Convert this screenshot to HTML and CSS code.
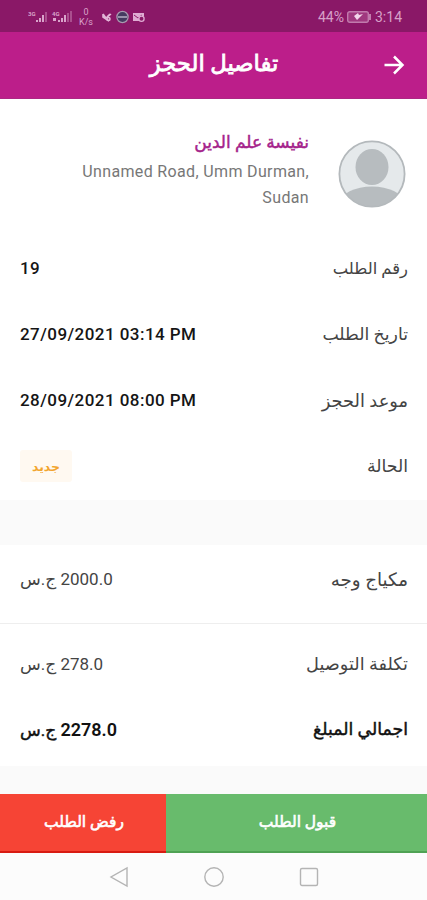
FILE: index.html
```html
<!DOCTYPE html>
<html lang="ar" dir="rtl">
<head>
<meta charset="utf-8">
<title>تفاصيل الحجز</title>
<link rel="stylesheet" href="styles.css">
</head>
<body>
<div class="status" dir="ltr">
  <div class="status-left">
    <svg class="signals" width="122" height="32" viewBox="0 0 122 32">
      <g fill="#d9a3cb">
        <text class="tiny" x="0" y="16">3G</text>
        <path d="M8 20h2v2H8zM11 18h2v4h-2zM14 15h2v7h-2z"/>
        <path d="M17 12h2v10h-2z" opacity=".4"/>
        <text class="tiny" x="24" y="16">4G</text>
        <path d="M25 18h3v3h-3zM30 20h2v2h-2zM33 18h2v4h-2zM36 15h2v7h-2z"/>
        <path d="M39 13h2v9h-2zM42 11h2v11h-2z" opacity=".4"/>
        <text class="speed" x="55.500" y="14.500">0</text>
        <text class="speed" x="51" y="25">K/s</text>
      </g>
      <g fill="none" stroke="#e2b5d7" stroke-width="1.600">
        <path d="M75 14l3 4 5-4M75 14v3l6 4M79 17l3-3"/>
        <circle cx="80.500" cy="19" r="1.500"/>
      </g>
      <circle cx="94.500" cy="17" r="5.600" fill="#453a60" stroke="#a79aaf" stroke-width="1.300"/>
      <path d="M90 17h9" stroke="#b7afc5" stroke-width="1.500"/>
      <path d="M105 13h11v3h-3v5h-8z" fill="#dfacd3"/>
      <path d="M106 15l4 3 4-3" fill="none" stroke="#8a1867"/>
      <circle cx="113.500" cy="18.800" r="2.600" fill="#8a1867" stroke="#dfacd3" stroke-width="1.300"/>
    </svg>
  </div>
  <div class="status-right">
    <span>44%</span>
    <svg width="25" height="12" viewBox="0 0 25 12">
      <rect x=".7" y=".7" width="20.600" height="10.600" rx="2" fill="#a0387f" stroke="#c17bad" stroke-width="1.400"/>
      <path d="M7 5l3 4 6-6-4 1-1-2z" fill="#f3d6eb"/>
      <path d="M23 3v6" stroke="#c17bad" stroke-width="2"/>
    </svg>
    <span>3:14</span>
  </div>
</div>
<header class="appbar">
  <svg class="back" width="22" height="22" viewBox="0 0 22 22"><path d="M1.500 11h18M11 2.500l8.500 8.500-8.500 8.500" fill="none" stroke="#fff" stroke-width="2.500"/></svg>
  <h1>تفاصيل الحجز</h1>
</header>
<main>
  <section class="card details">
    <div class="profile">
      <svg class="avatar" width="68" height="68" viewBox="0 0 68 68">
        <defs><clipPath id="face"><circle cx="34" cy="34" r="32.500"/></clipPath></defs>
        <circle cx="34" cy="34" r="33" fill="#e5e9eb"/>
        <g clip-path="url(#face)" fill="#b7bcbf"><ellipse cx="34" cy="27" rx="16.500" ry="18"/><ellipse cx="34" cy="62" rx="31" ry="15.500"/></g>
        <circle cx="34" cy="34" r="32.600" fill="none" stroke="#b4b9bc" stroke-width="1.800"/>
      </svg>
      <div class="who">
        <div class="name">نفيسة علم الدين</div>
        <div class="address" dir="ltr">Unnamed Road, Umm Durman,<br>Sudan</div>
      </div>
    </div>
    <div class="row number"><span class="label">رقم الطلب</span><span class="value" dir="ltr">19</span></div>
    <div class="row"><span class="label">تاريخ الطلب</span><span class="value" dir="ltr">27/09/2021 03:14 PM</span></div>
    <div class="row due"><span class="label">موعد الحجز</span><span class="value" dir="ltr">28/09/2021 08:00 PM</span></div>
    <div class="row"><span class="label">الحالة</span><span class="badge">جديد</span></div>
  </section>
  <section class="card costs">
    <div class="row service"><span class="label">مكياج وجه</span><span class="price">2000.0 ج.س</span></div>
    <div class="row delivery"><span class="label">تكلفة التوصيل</span><span class="price">278.0 ج.س</span></div>
    <div class="row total"><span class="label">اجمالي المبلغ</span><span class="price"><span class="amount">2278.0</span> ج.س</span></div>
  </section>
</main>
<div class="actions">
  <button class="accept">قبول الطلب</button>
  <button class="reject">رفض الطلب</button>
</div>
<nav class="sysnav" dir="ltr">
  <svg width="20" height="22" viewBox="0 0 20 22"><path d="M18 2v18L2 11z"/></svg>
  <svg width="22" height="22" viewBox="0 0 22 22"><circle cx="11" cy="11" r="9.200"/></svg>
  <svg width="20" height="22" viewBox="0 0 20 22"><rect x="1.500" y="2.500" width="17" height="17" rx="1.500"/></svg>
</nav>
</body>
</html>
```
FILE: styles.css
```css
* { box-sizing: border-box; }
body {
  margin: 0;
  width: 427px;
  height: 900px;
  overflow: hidden;
  display: flex;
  flex-direction: column;
  background: #fafafa;
  color: #444;
  font-family: Roboto, "DejaVu Sans", sans-serif;
}
.status {
  height: 32px;
  display: flex;
  justify-content: space-between;
  background: #8a1867;
  color: #d7a0c8;
}
.status-left { padding-left: 28px; }
.signals { display: block; }
.tiny { font: 700 6px Roboto, sans-serif; }
.speed { font: 9px Roboto, sans-serif; }
.status-right {
  display: flex;
  align-items: center;
  gap: 3px;
  padding: 2px 25px 0 0;
  font-size: 14px;
}
.appbar {
  height: 67px;
  display: grid;
  grid-template-columns: 66px 1fr 66px;
  align-items: center;
  background: #bc1e8a;
  border-bottom: 1px solid #ad2784;
  color: #fff;
}
.back { justify-self: center; }
.appbar h1 {
  margin: 0;
  padding: 0 0 3px 1px;
  font-size: 22.7px;
  font-weight: 400;
  line-height: 30px;
  text-align: center;
  -webkit-text-stroke: .8px;
}
main { flex: 1; }
.card { background: #fff; }
.details { height: 401px; }
.profile {
  height: 136px;
  display: flex;
  gap: 29px;
  padding: 28px 21px 0 0;
}
.avatar { margin-top: 13px; }
.name {
  color: #a5238b;
  font-size: 17px;
  line-height: 30px;
  -webkit-text-stroke: .45px;
}
.address {
  padding-top: 2px;
  color: #777;
  font-size: 16px;
  line-height: 26px;
  letter-spacing: .35px;
  text-align: right;
}
.row {
  height: 66px;
  display: flex;
  align-items: center;
  justify-content: space-between;
  padding: 0 19px 0 20px;
}
.label { font-size: 17.3px; }
.number .label { font-size: 16.4px; }
.due .label { font-size: 17.8px; }
.value {
  color: #151515;
  font-size: 17px;
  font-weight: 500;
  letter-spacing: .45px;
}
.badge {
  width: 52px;
  height: 32px;
  border-radius: 3px;
  background: #fff9f1;
  color: #f2a52f;
  font-size: 12.5px;
  font-weight: 700;
  line-height: 33px;
  text-align: center;
}
.costs {
  height: 221px;
  margin-top: 45px;
}
.service {
  height: 79px;
  padding-bottom: 10px;
  border-bottom: 1px solid #eee;
}
.service .label { font-size: 18.3px; }
.delivery { height: 76px; padding-top: 4px; }
.delivery .label { font-size: 17.7px; }
.price { font-size: 17px; letter-spacing: .2px; }
.total { height: 58px; color: #111; }
.total .label, .total .price { -webkit-text-stroke: .45px; }
.total .amount {
  font-size: 18px;
  font-weight: 600;
  letter-spacing: 1.2px;
  -webkit-text-stroke: 0;
}
.actions {
  height: 59px;
  display: flex;
}
.actions button {
  border: 0;
  padding: 0 0 1px;
  color: #fff;
  font: 400 15.5px Roboto, "DejaVu Sans", sans-serif;
  -webkit-text-stroke: .6px;
}
.actions .accept { flex: 1; padding-left: 2px; background: #68bb6c; border-bottom: 2px solid #4fa254; }
.actions .reject { width: 166px; padding-left: 2px; background: #f64435; border-bottom: 2px solid #d81b12; }
.sysnav {
  height: 47px;
  display: flex;
  align-items: center;
  justify-content: space-between;
  padding: 0 108px 0 109px;
  background: #fcfcfc;
}
.sysnav svg { fill: none; stroke: #b4b4b4; stroke-width: 1.4; }
```
